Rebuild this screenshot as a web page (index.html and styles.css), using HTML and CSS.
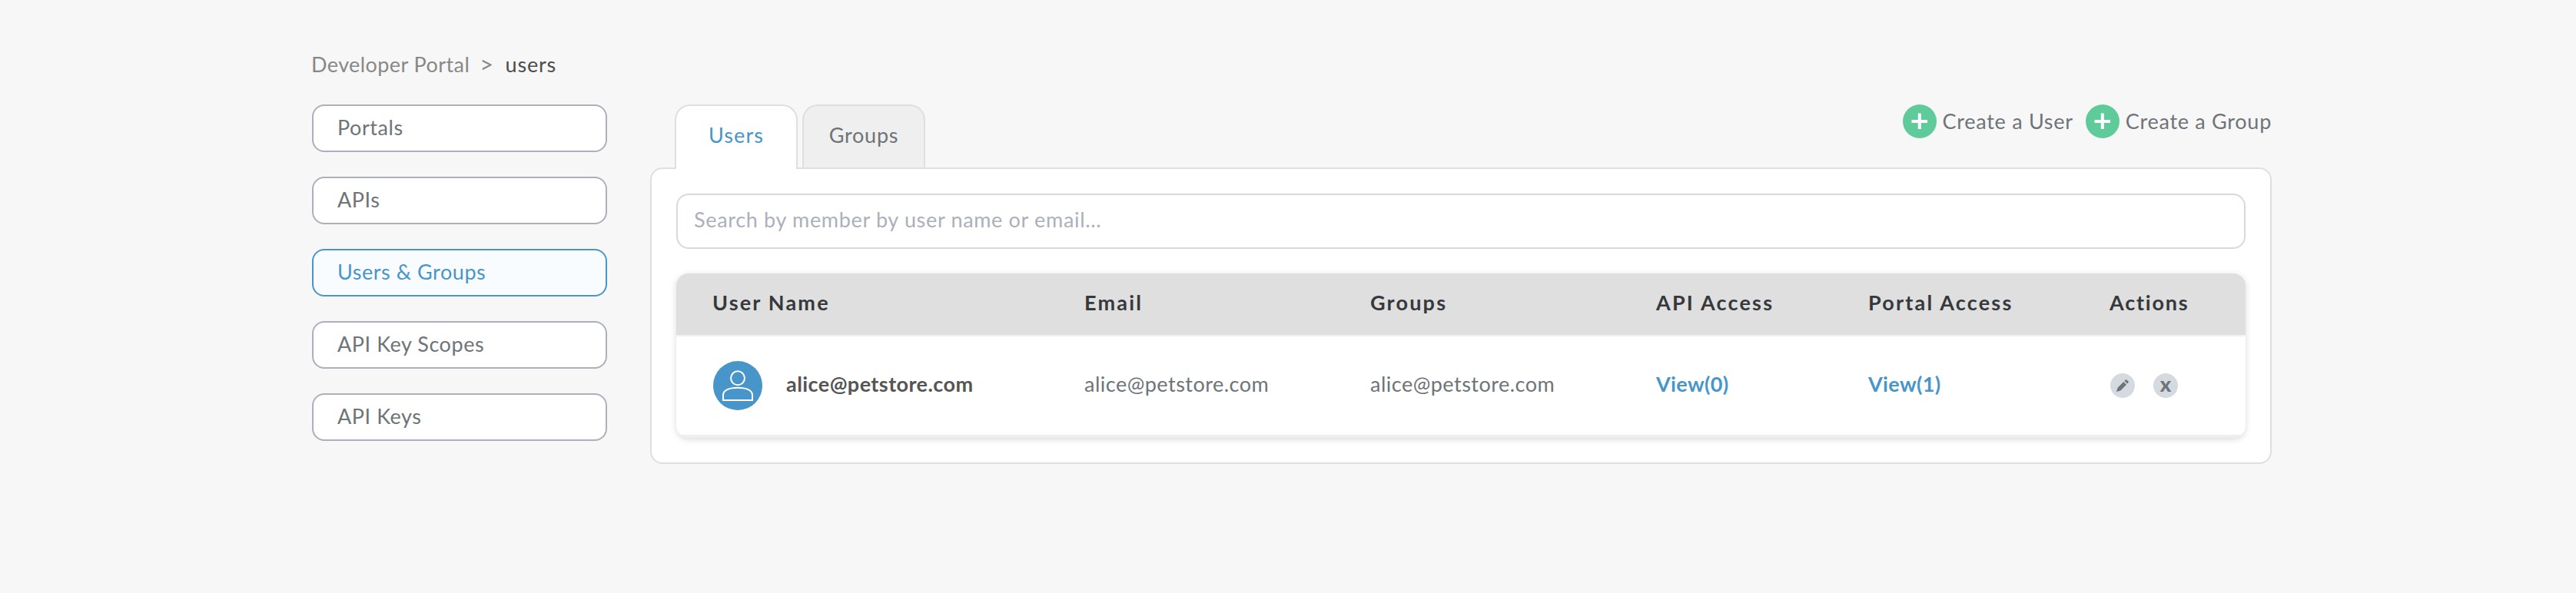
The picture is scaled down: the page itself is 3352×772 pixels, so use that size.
FILE: index.html
```
<!DOCTYPE html>
<html lang="en">
<head>
<meta charset="utf-8">
<title>Developer Portal - Users</title>
<link rel="stylesheet" href="styles.css">
</head>
<body>
<main class="page">
  <nav class="breadcrumb">
    <a class="crumb">Developer Portal</a>
    <span class="crumb-sep">&gt;</span>
    <span class="crumb-current">users</span>
  </nav>
  <div class="layout">
    <aside class="sidebar">
      <a class="side-link">Portals</a>
      <a class="side-link">APIs</a>
      <a class="side-link side-link-active">Users &amp; Groups</a>
      <a class="side-link">API Key Scopes</a>
      <a class="side-link">API Keys</a>
    </aside>
    <section class="content">
      <div class="toolbar">
        <div class="tabs">
          <a class="tab tab-active">Users</a>
          <a class="tab">Groups</a>
        </div>
        <div class="create-actions">
          <a class="create">
            <svg class="create-icon" viewBox="0 0 44 44"><circle cx="22" cy="22" r="22" fill="#5fcb9a"/><path d="M11.5 22H32M21.8 11.5V32" stroke="#fff" stroke-width="4"/></svg>
            <span class="create-label">Create a User</span>
          </a>
          <a class="create">
            <svg class="create-icon" viewBox="0 0 44 44"><circle cx="22" cy="22" r="22" fill="#5fcb9a"/><path d="M11.5 22H32M21.8 11.5V32" stroke="#fff" stroke-width="4"/></svg>
            <span class="create-label">Create a Group</span>
          </a>
        </div>
      </div>
      <div class="panel">
        <div class="search">Search by member by user name or email...</div>
        <div class="table">
          <div class="row row-head">
            <span>User Name</span>
            <span>Email</span>
            <span>Groups</span>
            <span>API Access</span>
            <span>Portal Access</span>
            <span class="head-actions">Actions</span>
          </div>
          <div class="row row-body">
            <div class="user">
              <svg class="avatar" viewBox="0 0 64 64"><circle cx="32" cy="32" r="32" fill="#4896c9"/><g fill="none" stroke="#fff" stroke-width="2"><circle cx="32" cy="22.3" r="9"/><path d="M13 51V44.5C13 38 21 34.8 32 34.8S51 38 51 44.5V51Z"/></g></svg>
              <span class="cell user-name">alice@petstore.com</span>
            </div>
            <span class="cell">alice@petstore.com</span>
            <span class="cell">alice@petstore.com</span>
            <a class="cell view">View(0)</a>
            <a class="cell view">View(1)</a>
            <div class="actions">
              <svg class="edit" viewBox="0 0 32 32"><circle cx="16" cy="16" r="16" fill="#d5d9e0"/><path d="M8 24L9.6 18.7L17.3 11L21 14.7L13.3 22.4ZM18.4 9.9L19.7 8.6Q20.7 7.8 21.7 8.7L23.4 10.4Q24.2 11.3 23.4 12.3L22.1 13.6Z" fill="#6e7477"/></svg>
              <a class="remove">x</a>
            </div>
          </div>
        </div>
      </div>
    </section>
  </div>
</main>
</body>
</html>
```
FILE: styles.css
```
* {
  box-sizing: border-box;
}

body {
  margin: 0;
  background: #f7f7f7;
  color: #6e7477;
  font-family: Lato, "Open Sans", sans-serif;
  font-size: 27px;
  letter-spacing: 0.55px;
}

.page {
  width: 2550px;
  margin-left: 406px;
  padding-top: 63px;
}

.breadcrumb {
  display: flex;
  height: 73px;
  line-height: 41px;
  color: #888;
  letter-spacing: 0.42px;
}

.crumb {
  margin-left: -1px;
}

.crumb-sep {
  margin-left: 13px;
  font-size: 31px;
}

.crumb-current {
  margin-left: 15px;
  color: #4d4d4d;
  letter-spacing: 0.8px;
}

.layout {
  display: flex;
  gap: 56px;
  align-items: flex-start;
}

.sidebar {
  display: flex;
  flex-direction: column;
  gap: 32px;
  width: 384px;
}

.side-link {
  height: 62px;
  padding-left: 31px;
  border: 2px solid #acb0bb;
  border-radius: 16px;
  background: #fff;
  line-height: 55px;
}

.side-link-active {
  border-color: #4896c9;
  background: #f9fcff;
  color: #4896c9;
}

.content {
  flex: 1;
}

.toolbar {
  display: flex;
  justify-content: space-between;
  height: 82px;
  padding-left: 32px;
}

.tabs {
  display: flex;
  gap: 6px;
}

.tab {
  width: 160px;
  height: 82px;
  border: 2px solid #dfdfdf;
  border-bottom: 0;
  border-radius: 20px 20px 0 0;
  background: #efefef;
  line-height: 75px;
  text-align: center;
  letter-spacing: 0.74px;
}

.tab-active {
  position: relative;
  z-index: 1;
  height: 84px;
  background: #fff;
  color: #4896c9;
  letter-spacing: 1.1px;
}

.create-actions {
  display: flex;
  gap: 16px;
}

.create {
  display: flex;
  gap: 8px;
  line-height: 43px;
  letter-spacing: 0.72px;
}

.create-icon {
  width: 44px;
  height: 44px;
}

.panel {
  height: 386px;
  padding: 32px;
  border: 2px solid #dfdfdf;
  border-radius: 16px;
  background: #fff;
}

.search {
  height: 72px;
  padding-left: 21px;
  border: 2px solid #d5d9e0;
  border-radius: 16px;
  color: #acb0bb;
  line-height: 63px;
  letter-spacing: 0.67px;
}

.table {
  height: 214px;
  margin-top: 32px;
  overflow: hidden;
  border-radius: 16px;
  background: #efefef;
  box-shadow: 0 2px 8px rgba(0, 0, 0, 0.15);
}

.row {
  display: grid;
  grid-template-columns: 484px 372px 372px 276px 314px 1fr;
  padding-left: 47px;
}

.row-head {
  height: 82px;
  border-bottom: 2px solid #f1f1f1;
  background: #dfdfdf;
  color: #36393c;
  font-weight: 700;
  line-height: 75px;
  letter-spacing: 2.2px;
}

.head-actions {
  letter-spacing: 1.8px;
}

.row-body {
  align-items: center;
  height: 128px;
  background: #fff;
}

.cell {
  padding-bottom: 5px;
  letter-spacing: 0.49px;
}

.user {
  display: flex;
  align-items: center;
  gap: 31px;
  padding-left: 1px;
}

.avatar {
  width: 64px;
  height: 64px;
}

.user-name {
  color: #555;
  font-weight: 700;
  letter-spacing: 0.44px;
}

.view {
  color: #4896c9;
  font-weight: 700;
  letter-spacing: 0.36px;
}

.actions {
  display: flex;
  gap: 24px;
  padding-left: 1px;
}

.edit {
  width: 32px;
  height: 32px;
}

.remove {
  width: 32px;
  height: 32px;
  border-radius: 50%;
  background: #d5d9e0;
  font-weight: 900;
  line-height: 27px;
  text-align: center;
  letter-spacing: 0;
}
```
